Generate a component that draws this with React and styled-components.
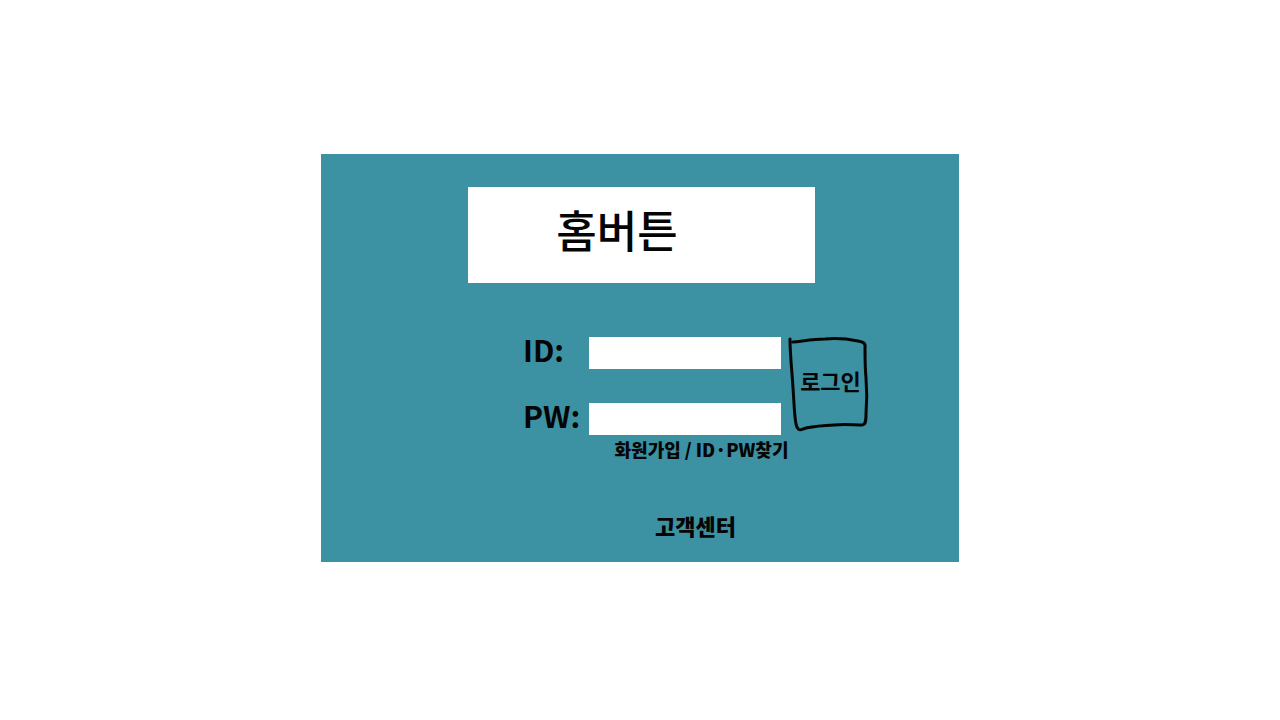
import React from "react";
import styled, { createGlobalStyle } from "styled-components";

const GlobalStyle = createGlobalStyle`
  *, *::before, *::after { box-sizing: border-box; }
  body {
    margin: 0;
    background: #fff;
    color: #050505;
    font-family: "Noto Sans CJK KR", "Liberation Sans", sans-serif;
  }
`;

const Page = styled.main`
  display: flex;
  align-items: center;
  justify-content: center;
  min-height: 100vh;
  padding-bottom: 4px;
`;

const Panel = styled.section`
  display: flex;
  flex-direction: column;
  width: 100%;
  max-width: 638px;
  padding: 33px 16px 21px 18px;
  background: #3c91a3;
`;

const HomeButton = styled.button`
  align-self: center;
  width: 100%;
  max-width: 347px;
  height: 96px;
  padding: 0 48px 12px 0;
  border: 0;
  background: #fff;
  color: inherit;
  font: 500 44px/56px "Noto Sans CJK KR", sans-serif;
  cursor: pointer;
`;

const Account = styled.div`
  display: flex;
  flex-direction: column;
  align-items: center;
  width: 100%;
  max-width: 345px;
  margin: 54px 75px 0 auto;
`;

const LoginForm = styled.form`
  display: grid;
  grid-template-columns: 66px minmax(0, 1fr) 79px;
  grid-template-rows: 32px 32px;
  row-gap: 34px;
  align-items: center;
  width: 100%;
`;

const Label = styled.label`
  grid-column: 1;
  padding-bottom: 8px;
  font-size: 30px;
  font-weight: 700;
  line-height: 24px;
`;

const Field = styled.input`
  grid-column: 2;
  width: calc(100% - 8px);
  height: 32px;
  padding: 0 8px;
  border: 0;
  border-radius: 0;
  background: #fff;
  font: 16px/24px "Noto Sans CJK KR", sans-serif;
`;

const LoginButton = styled.button`
  position: relative;
  grid-column: 3;
  grid-row: 1 / 3;
  align-self: stretch;
  padding: 0 0 12px 4px;
  border: 0;
  background: none;
  color: inherit;
  font: 700 22px/32px "Noto Sans CJK KR", sans-serif;
  cursor: pointer;
`;

const Outline = styled.svg`
  position: absolute;
  inset: 0;
  width: 100%;
  height: 100%;
  overflow: visible;
  fill: none;
  stroke: #050505;
  stroke-width: 3;
  stroke-linecap: round;
  stroke-linejoin: round;
`;

const Links = styled.nav`
  display: flex;
  gap: 4px;
  padding-left: 12px;
  font-size: 18px;
  font-weight: 900;
  line-height: 28px;
  white-space: nowrap;
`;

const TextLink = styled.a`
  color: inherit;
  text-decoration: none;
`;

const SupportLink = styled(TextLink)`
  margin-top: 46px;
  font-size: 22px;
  font-weight: 900;
  line-height: 32px;
`;

export default function App() {
  return (
    <>
      <GlobalStyle />
      <Page>
        <Panel>
          <HomeButton type="button">홈버튼</HomeButton>
          <Account>
            <LoginForm onSubmit={(event) => event.preventDefault()}>
              <Label htmlFor="user-id">ID:</Label>
              <Field id="user-id" name="id" type="text" autoComplete="username" />
              <Label htmlFor="user-pw">PW:</Label>
              <Field id="user-pw" name="pw" type="password" autoComplete="current-password" />
              <LoginButton type="submit">
                <Outline viewBox="0 0 79 98" preserveAspectRatio="none" aria-hidden="true">
                  <path d="M1 2C1 18 3 34 4 51C5 63 5 76 7 87C8 92 10 94 14 92C23 89 34 89 45 88C55 87 65 88 73 88C77 88 77 83 77 77C78 65 78 53 77 41C76 31 76 20 76 11C77 6 74 5 69 4C59 2 47 1 36 2C25 2 14 4 4 5" />
                </Outline>
                로그인
              </LoginButton>
            </LoginForm>
            <Links>
              <TextLink href="#join">화원가입</TextLink>
              <span>/</span>
              <TextLink href="#find">ID·PW찾기</TextLink>
            </Links>
            <SupportLink href="#support">고객센터</SupportLink>
          </Account>
        </Panel>
      </Page>
    </>
  );
}
